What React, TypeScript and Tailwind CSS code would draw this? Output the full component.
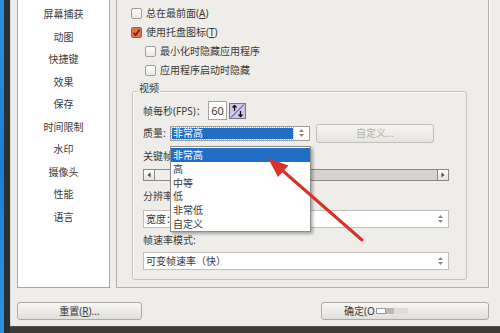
import React from "react";

const FONT = { fontFamily: "'Noto Sans','Noto Sans CJK SC',sans-serif" };

function Check({ checked = false }: { checked?: boolean }) {
  return checked ? (
    <span className="w-[11px] h-[11px] rounded-[2px] border border-[#c2552b] bg-[#e4703f] flex items-center justify-center shrink-0">
      <svg width="9" height="9" viewBox="0 0 9 9">
        <path d="M1.5 4.8 L3.6 7 L7.6 1.8" stroke="#6e1c08" strokeWidth="1.6" fill="none" />
      </svg>
    </span>
  ) : (
    <span className="w-[11px] h-[11px] rounded-[2px] border border-[#a19e99] bg-gradient-to-b from-white to-[#ebe9e6] shrink-0" />
  );
}

function UpDown() {
  return (
    <svg width="7" height="10" viewBox="0 0 7 10">
      <path d="M3.5 1 L6 4 L1 4 Z" fill="#8a8884" />
      <path d="M3.5 9 L6 6 L1 6 Z" fill="#8a8884" />
    </svg>
  );
}

const sideItems = ["屏幕捕获", "动图", "快捷键", "效果", "保存", "时间限制", "水印", "摄像头", "性能", "语言"];
const dropItems = ["非常高", "高", "中等", "低", "非常低", "自定义"];

export default function App() {
  return (
    <div className="relative w-[500px] h-[333px] overflow-hidden flex text-[#3a3a3a]" style={FONT}>
      <div className="w-[4px] h-full bg-gradient-to-b from-[#2a8fe0] via-[#1b7fd6] to-[#2b92e3]" />
      <div className="w-[6px] h-full bg-[#2f2e2c]" />
      <div className="flex-1 flex flex-col">
        <div className="h-[326px] bg-[#efede9] border-l border-[#d9d7d3] flex flex-col">
          <div className="flex h-[288px] pl-[6px]">
            {/* sidebar */}
            <div className="w-[93px] h-full bg-white border border-t-0 border-[#a8a6a2] flex flex-col items-center pt-[3px] text-[10px]">
              {sideItems.map((s) => (
                <div key={s} className="h-[22.5px] flex items-center leading-none">
                  {s}
                </div>
              ))}
            </div>
            {/* content panel */}
            <div className="ml-[6px] w-[373px] h-full border-l border-r border-b border-[#b3b0ab] shadow-[1px_0_0_#ffffff] flex flex-col text-[10px]">
              <div className="pl-[14px] pt-[4px] flex flex-col">
                <div className="h-[19px] flex items-center gap-[4px]">
                  <Check />
                  <span>总在最前面(<u>A</u>)</span>
                </div>
                <div className="h-[19px] flex items-center gap-[4px]">
                  <Check checked />
                  <span>使用托盘图标(<u>T</u>)</span>
                </div>
                <div className="h-[19px] flex items-center gap-[4px] pl-[14px]">
                  <Check />
                  <span>最小化时隐藏应用程序</span>
                </div>
                <div className="h-[19px] flex items-center gap-[4px] pl-[14px]">
                  <Check />
                  <span>应用程序启动时隐藏</span>
                </div>
              </div>

              {/* group box */}
              <div className="relative ml-[15px] mt-[11px] w-[335px] h-[189px] border border-[#c6c3be] rounded-[3px] shadow-[inset_1px_1px_0_#ffffff] pl-[10px] pt-[9px] flex flex-col">
                <span className="absolute top-[-10px] left-[5px] px-[1px] leading-[12px] bg-[#efede9]">视频</span>

                {/* FPS */}
                <div className="h-[19px] flex items-center">
                  <span className="w-[65px] leading-none">帧每秒(FPS)：</span>
                  <span className="w-[19px] h-[19px] bg-white border border-[#a7a49f] flex items-center justify-center text-[11px] leading-none">
                    60
                  </span>
                  <span className="ml-[2px] w-[17px] h-[16px] border border-[#77729a] bg-[#cfc8ec]">
                    <svg width="15" height="14" viewBox="0 0 15 14">
                      <path d="M14 0.5 L1 13.5" stroke="#3b3b52" strokeWidth="1" />
                      <path d="M4.5 1.5 L4.5 7 M2.5 3.5 L4.5 1.5 L6.5 3.5" stroke="#111" strokeWidth="1.3" fill="none" />
                      <path d="M10.5 7 L10.5 12.5 M8.5 10.5 L10.5 12.5 L12.5 10.5" stroke="#111" strokeWidth="1.3" fill="none" />
                    </svg>
                  </span>
                </div>

                {/* quality */}
                <div className="mt-[3px] h-[20px] flex items-center">
                  <span className="w-[27px] leading-none">质量:</span>
                  <div className="w-[140px] h-[15px] bg-white border border-[#a09d98] flex items-center pl-[1px] pr-[4px]">
                    <span className="flex-1 h-[11px] bg-[#1f6fc6] text-white leading-[11px] pl-[1px] outline-1 outline-dotted outline-[#9cc0ee]">
                      非常高
                    </span>
                    <span className="ml-[5px] flex items-center">
                      <UpDown />
                    </span>
                  </div>
                  <div className="ml-[6px] w-[118px] h-[19px] rounded-[3px] border border-[#c3c0bb] bg-gradient-to-b from-[#f6f5f3] to-[#e6e4e0] flex items-center justify-center text-[#b2afaa]">
                    自定义...
                  </div>
                </div>

                <div className="mt-[6px] h-[14px] flex items-center leading-none">关键帧</div>

                {/* scrollbar */}
                <div className="mt-[6px] w-[306px] h-[12px] flex border border-[#8d8a86] bg-[#d6d4d1]">
                  <span className="w-[11px] h-full bg-gradient-to-b from-[#fbfbfa] to-[#e4e2df] border-r border-[#8d8a86] flex items-center justify-center">
                    <svg width="4" height="6" viewBox="0 0 4 6">
                      <path d="M3.5 0.5 L0.5 3 L3.5 5.5 Z" fill="#444" />
                    </svg>
                  </span>
                  <span className="w-[20px] h-full bg-[#efeeec] border-r border-[#a9a7a3]" />
                  <span className="flex-1" />
                  <span className="w-[11px] h-full bg-gradient-to-b from-[#fbfbfa] to-[#e4e2df] border-l border-[#8d8a86] flex items-center justify-center">
                    <svg width="4" height="6" viewBox="0 0 4 6">
                      <path d="M0.5 0.5 L3.5 3 L0.5 5.5 Z" fill="#444" />
                    </svg>
                  </span>
                </div>

                <div className="mt-[8px] h-[14px] flex items-center leading-none">分辨率</div>
                <div className="mt-[7px] w-[306px] h-[18px] bg-white border border-[#c2bfba] flex items-center pl-[2px] pr-[4px]">
                  <span className="flex-1 leading-none">宽度：</span>
                  <UpDown />
                </div>

                <div className="mt-[5px] h-[14px] flex items-center leading-none">帧速率模式:</div>
                <div className="mt-[5px] w-[306px] h-[18px] bg-white border border-[#c2bfba] flex items-center pl-[2px] pr-[4px]">
                  <span className="flex-1 leading-none">可变帧速率（快）</span>
                  <UpDown />
                </div>

                {/* dropdown list */}
                <div className="absolute top-[54px] left-[37px] w-[141px] h-[86px] bg-white border border-[#8e8c88] shadow-[2px_2px_3px_rgba(0,0,0,0.3)] pt-[1px] flex flex-col">
                  {dropItems.map((d, i) => (
                    <div
                      key={d}
                      className={
                        i === 0
                          ? "h-[14px] flex items-center pl-[2px] leading-none bg-[#1f6fc6] text-white"
                          : "h-[14px] flex items-center pl-[2px] leading-none"
                      }
                    >
                      {d}
                    </div>
                  ))}
                </div>
              </div>
            </div>
          </div>

          {/* bottom buttons */}
          <div className="mt-[14px] h-[18px] flex pl-[6px] pr-[11px] text-[10px]">
            <div className="w-[125px] h-full rounded-[3px] border border-[#aeaba7] bg-gradient-to-b from-[#f8f7f5] to-[#e1dfdb] flex items-center justify-center">
              重置(<u>R</u>)...
            </div>
            <div className="ml-auto w-[168px] h-full rounded-[3px] border border-[#aeaba7] bg-gradient-to-b from-[#f8f7f5] to-[#e1dfdb] flex items-center pl-[22px]">
              <span>确定(O</span>
              <span className="ml-[1px] w-[10px] h-[6px] bg-white border border-[#9a9894]" />
              <span className="w-[8px] h-[6px] bg-[#b9b8b6]" />
              <span className="w-[14px] h-[6px] bg-[#dedddb]" />
            </div>
          </div>
        </div>
        <div className="flex-1 bg-[#3a3936] border-t border-[#55534f]" />
      </div>

      {/* red annotation arrow */}
      <svg className="absolute left-0 top-0 pointer-events-none" width="500" height="333" viewBox="0 0 500 333">
        <line x1="283" y1="171" x2="362" y2="240" stroke="#d8322a" strokeWidth="3" strokeLinecap="round" />
        <polygon points="268,158 288.5,165.5 278,177" fill="#d8322a" />
      </svg>
    </div>
  );
}
